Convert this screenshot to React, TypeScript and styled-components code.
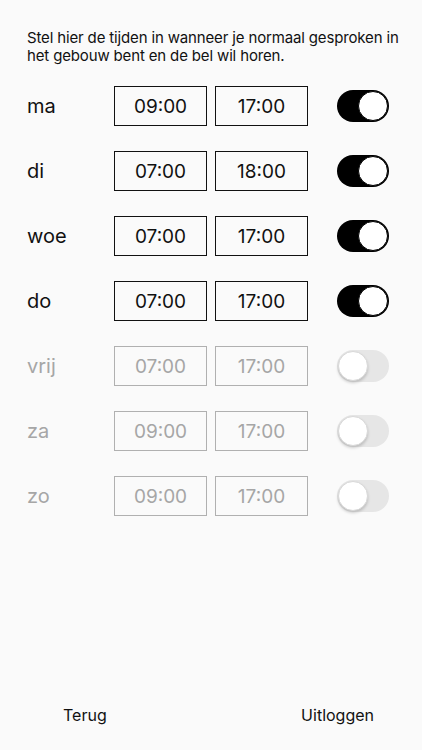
import React, { useState } from 'react';
import styled, { createGlobalStyle } from 'styled-components';

const GlobalStyle = createGlobalStyle`
    html, body {
        margin: 0;
        padding: 0;
        background: #fafafa;
    }
    body {
        font-family: Inter, 'Liberation Sans', Arial, sans-serif;
        color: #111;
    }
`;

type Day = {
    name: string;
    from: string;
    to: string;
    on: boolean;
};

const initialDays: Day[] = [
    { name: 'ma', from: '09:00', to: '17:00', on: true },
    { name: 'di', from: '07:00', to: '18:00', on: true },
    { name: 'woe', from: '07:00', to: '17:00', on: true },
    { name: 'do', from: '07:00', to: '17:00', on: true },
    { name: 'vrij', from: '07:00', to: '17:00', on: false },
    { name: 'za', from: '09:00', to: '17:00', on: false },
    { name: 'zo', from: '09:00', to: '17:00', on: false },
];

const Screen = styled.div`
    display: flex;
    flex-direction: column;
    min-height: 750px;
    box-sizing: border-box;
`;

const Intro = styled.p`
    margin: 29px 12px 0 27px;
    font-size: 15px;
    line-height: 18px;
    letter-spacing: -0.15px;
    color: #111;
`;

const DayList = styled.div`
    display: flex;
    flex-direction: column;
    row-gap: 25px;
    margin-top: 21px;
    padding-left: 27px;
`;

const DayRow = styled.div<{ $off?: boolean }>`
    display: flex;
    align-items: center;
    height: 40px;
    color: ${(props) => (props.$off ? '#a6a6a6' : '#111')};
`;

const DayName = styled.span`
    width: 87px;
    font-size: 20px;
`;

const TimeBox = styled.div<{ $off?: boolean }>`
    width: 93px;
    height: 40px;
    box-sizing: border-box;
    display: flex;
    align-items: center;
    justify-content: center;
    border: 1px solid ${(props) => (props.$off ? '#b0b0b0' : '#111')};
    font-size: 19px;
    & + & {
        margin-left: 8px;
    }
`;

const Switch = styled.button<{ $on: boolean }>`
    position: relative;
    width: 52px;
    height: 32px;
    margin-left: 29px;
    padding: 0;
    border: none;
    border-radius: 16px;
    background: ${(props) => (props.$on ? '#000' : '#e6e6e6')};
    cursor: pointer;

    .knob {
        position: absolute;
        top: 1px;
        left: ${(props) => (props.$on ? '21px' : '1px')};
        width: 30px;
        height: 30px;
        box-sizing: border-box;
        border-radius: 50%;
        background: #fff;
        border: ${(props) => (props.$on ? '1.5px solid #000' : '0.5px solid #d8d8d8')};
        box-shadow: ${(props) => (props.$on ? 'none' : '0 2px 3px rgba(0, 0, 0, 0.18)')};
    }
`;

const Footer = styled.div`
    margin-top: auto;
    display: flex;
    justify-content: space-between;
    padding: 0 48px 25px 63px;
`;

const FooterButton = styled.button`
    background: none;
    border: none;
    padding: 0;
    font-family: inherit;
    font-size: 16px;
    line-height: 20px;
    color: #111;
    cursor: pointer;
`;

const App = () => {
    const [days, setDays] = useState<Day[]>(initialDays);

    const toggle = (index: number) => {
        setDays((prev) => prev.map((d, i) => (i === index ? { ...d, on: !d.on } : d)));
    };

    return (
        <>
            <GlobalStyle />
            <Screen>
                <Intro>
                    Stel hier de tijden in wanneer je normaal gesproken in het gebouw bent en de bel wil horen.
                </Intro>
                <DayList>
                    {days.map((day, i) => (
                        <DayRow key={day.name} $off={!day.on}>
                            <DayName>{day.name}</DayName>
                            <TimeBox $off={!day.on}>{day.from}</TimeBox>
                            <TimeBox $off={!day.on}>{day.to}</TimeBox>
                            <Switch $on={day.on} onClick={() => toggle(i)} aria-label={day.name}>
                                <span className="knob" />
                            </Switch>
                        </DayRow>
                    ))}
                </DayList>
                <Footer>
                    <FooterButton>Terug</FooterButton>
                    <FooterButton>Uitloggen</FooterButton>
                </Footer>
            </Screen>
        </>
    );
};

export default App;
